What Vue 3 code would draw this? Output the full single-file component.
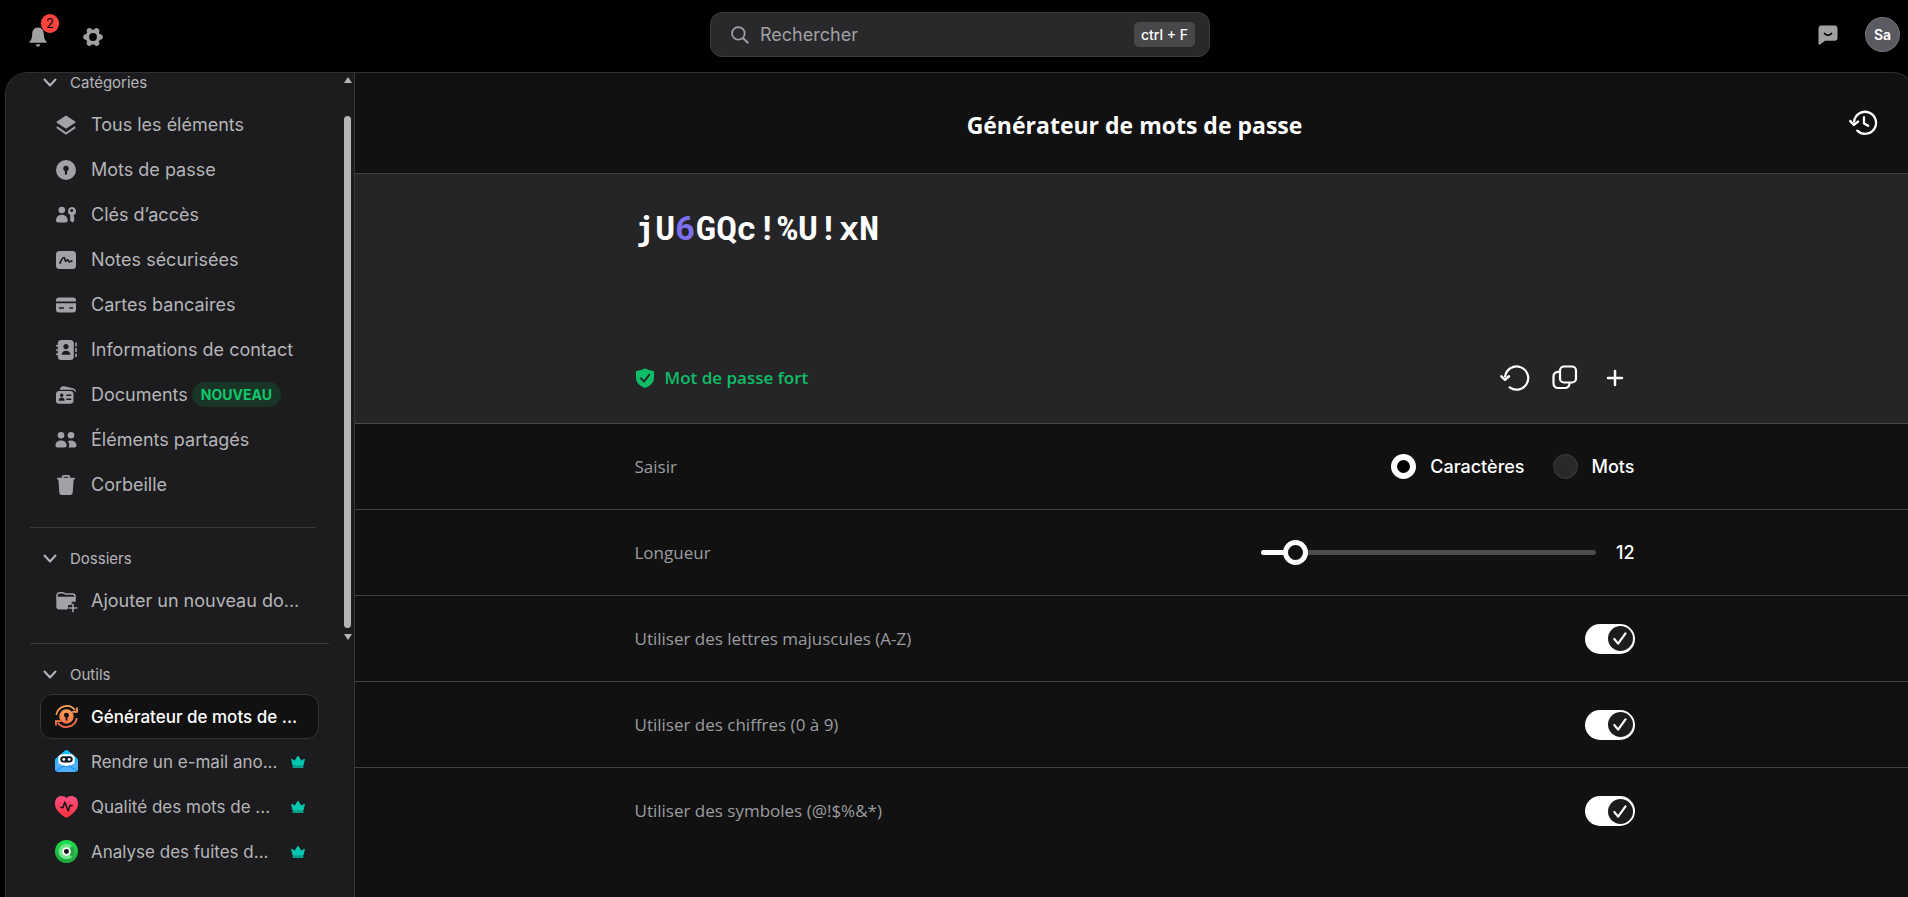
<script setup>
import { ref, h } from 'vue'

const bg = '#1c1c1e'
const glyphs = {
  chevron: '<path d="M4.500 7.500l5.500 6 5.500-6" fill="none" stroke="currentColor" stroke-width="2" stroke-linecap="round" stroke-linejoin="round"/>',
  bell: '<path d="M10 .5c-4 0-5.800 3-5.800 6.400 0 4-.9 5.800-2.600 7.500-.5.6-.2 1.300.6 1.300h15.600c.8 0 1.100-.7.6-1.300-1.700-1.700-2.600-3.500-2.600-7.500C15.800 3.500 14 .5 10 .5z"/><path d="M7.700 17.300h4.600c-.3 1.600-1.200 2.400-2.300 2.400s-2-.8-2.300-2.400z"/>',
  gear: '<circle cx="10" cy="10" r="7.400"/><path d="M2.900 10h14.200M6.400 3.800l7.200 12.400M13.600 3.800L6.400 16.200" stroke="currentColor" stroke-width="5.400" stroke-linecap="round"/><circle cx="10" cy="10" r="3.900" fill="#000"/>',
  search: '<circle cx="8.200" cy="8.200" r="7" fill="none" stroke="currentColor" stroke-width="1.900"/><path d="M13.200 13.200l6 6" stroke="currentColor" stroke-width="2.300"/>',
  chat: '<path d="M3.500.5h13A3 3 0 0 1 19.500 3.500v9.300a3 3 0 0 1-3 3H7l-5 3.800c-.8.5-1.500.2-1.500-.8V3.500a3 3 0 0 1 3-3z"/><path d="M6.500 8.500c2 2.300 5 2.300 7 0" fill="none" stroke="#000" stroke-width="1.700" stroke-linecap="round"/>',
  layers: '<path d="M10 .4l9.200 6c.5.400.5.900 0 1.300L10 13.800.8 7.700c-.5-.4-.5-.9 0-1.300z"/><path d="M.8 12.200L10 18.500l9.200-6.300" fill="none" stroke="currentColor" stroke-width="2"/>',
  keyhole: `<circle cx="10" cy="10" r="10"/><circle cx="10" cy="8.500" r="2.700" fill="${bg}"/><rect x="8.900" y="9.500" width="2.200" height="5.200" rx="1" fill="${bg}"/>`,
  passkey: `<circle cx="5.800" cy="5" r="3.300"/><path d="M0 15.600c0-3.600 2.300-5.800 5.800-5.800s5.900 2.200 5.900 5.800c0 1.300-.9 1.900-2 1.900H2c-1.200 0-2-.6-2-1.900z"/><path d="M15.700 2a4.300 4.300 0 0 1 2.200 8l-.1 1.700.9 1.200-.9 1.200.7 1.200-2 2.500-2.300-2.200V10A4.300 4.300 0 0 1 15.700 2z"/><circle cx="15.700" cy="5.600" r="1.500" fill="${bg}"/>`,
  note: `<rect y="1" width="20" height="18" rx="3.500"/><path d="M4 13c1.200-2 2.300-5.500 4-5.500 1.500 0 .4 3.700 1.800 3.700.9 0 1-1.500 2-1.300.9.200.6 2 1.600 2 .8 0 1.200-.8 2.400-.7" fill="none" stroke="${bg}" stroke-width="1.700" stroke-linecap="round"/>`,
  card: `<path d="M3 2.500h14a3 3 0 0 1 3 3v.900H0v-.9a3 3 0 0 1 3-3z"/><path d="M0 8.300h20v6.200a3 3 0 0 1-3 3H3a3 3 0 0 1-3-3z"/><path d="M3 13h5M13.500 13h3.500" stroke="${bg}" stroke-width="1.700"/>`,
  contact: `<rect x="1.800" width="16" height="20" rx="3.500"/><path d="M0 5.800h3M0 10h3M0 14.200h3" stroke="currentColor" stroke-width="1.600"/><path d="M20 2.500v4M20 8v4M20 13.500v3.500" stroke="currentColor" stroke-width="1.600"/><circle cx="10" cy="6.600" r="2.600" fill="${bg}"/><path d="M5.600 14.700c0-5.300 8.800-5.300 8.800 0z" fill="${bg}"/>`,
  documents: `<path d="M3.500 4.700C4.300 2 6 .9 8.500 1.300l8.300 1.900c2.200.5 3.300 2 3.200 4.300l-1.300-1.300c-.7-.9-1.600-1.500-3-1.500z"/><rect y="6" width="17.500" height="12.800" rx="3.300"/><circle cx="5.700" cy="10.200" r="1.700" fill="${bg}"/><path d="M2.700 15.700c0-4.200 6-4.200 6 0z" fill="${bg}"/><path d="M10.300 10.300h5M10.300 14.300h5" stroke="${bg}" stroke-width="1.600"/>`,
  people: '<circle cx="5" cy="5.200" r="3.300"/><circle cx="15" cy="5.200" r="3.300"/><path d="M-.5 15.500c0-3.200 2.300-5 5.500-5s5.600 1.800 5.600 5c0 1.300-.8 2-2 2H1.500c-1.300 0-2-.7-2-2z"/><path d="M11.700 11.200c4-1.800 8.800.3 8.800 4.300 0 1.300-.8 2-2 2h-5.900c1.100-2.200.7-4.700-.9-6.300z"/>',
  trash: '<path fill-rule="evenodd" d="M7.800 0h4.400c1.300 0 2 .8 2 2v.7h3.900c.7 0 1 .4 1 .9s-.3 1-1 1h-.5l-.9 12.900c-.1 1.500-1 2.500-2.500 2.500H5.800c-1.500 0-2.400-1-2.500-2.500L2.400 4.600h-.5c-.7 0-1-.4-1-1s.3-.9 1-.9h3.900V2c0-1.200.7-2 2-2zm-.2 2.700h4.800v-.9H7.600z"/>',
  folder: '<path d="M1 8V4.300A2.500 2.500 0 0 1 3.500 1.800h3c1.500 0 2 1.300 3.500 1.300h6.500a2.500 2.500 0 0 1 2.500 2.500V8" fill="none" stroke="currentColor" stroke-width="1.500"/><path d="M.3 8.200a2.500 2.500 0 0 1 2.500-2.500h14.400a2.500 2.500 0 0 1 2.500 2.500v2.600h-4v3.300h-3.500v3.500l-1 1H3.300a3 3 0 0 1-3-3z"/><path d="M17 12.700v8.600M12.700 17h8.600" stroke="currentColor" stroke-width="1.600"/>',
  generator: '<defs><linearGradient id="orange" x1="0" y1="0" x2="0" y2="24" gradientUnits="userSpaceOnUse"><stop stop-color="#ffaa55"/><stop offset="1" stop-color="#ff6a4d"/></linearGradient></defs><circle cx="12" cy="12" r="7.500" fill="url(#orange)"/><path d="M1.300 10.300A11 11 0 0 1 21 5.500M22.700 13.700A11 11 0 0 1 3 18.500M23 2.500v4.700h-5M1 21.500v-4.700h5" fill="none" stroke="url(#orange)" stroke-width="1.800"/><circle cx="12" cy="10.700" r="2.600" fill="#111"/><rect x="11" y="12" width="2" height="4.500" rx="1" fill="#111"/>',
  email: '<defs><linearGradient id="blue" x1="0" y1="0" x2="0" y2="24" gradientUnits="userSpaceOnUse"><stop stop-color="#0fc6ff"/><stop offset="1" stop-color="#359cff"/></linearGradient></defs><path d="M10.300.8c1-.9 2.400-.9 3.400 0L23 8.500c.6.500 1 1.300 1 2V19a4 4 0 0 1-4 4H4a4 4 0 0 1-4-4v-8.500c0-.8.400-1.500 1-2z" fill="url(#blue)"/><path d="M3.500 8.500c0-2.500 1.800-4 4-4h9c2.200 0 4 1.500 4 4v6L12 17.500l-8.500-3z" fill="#fff"/><rect x="5.500" y="6.500" width="13" height="6.500" rx="3.250" fill="#0a1420"/><circle cx="9.200" cy="9.800" r="1.500" fill="#fff"/><circle cx="14.800" cy="9.800" r="1.500" fill="#fff"/><path d="M0 12.500l9.500 4.200c1.600.8 3.400.8 5 0l9.500-4.200V19a4 4 0 0 1-4 4H4a4 4 0 0 1-4-4z" fill="#4db0ff"/><path d="M.8 21.800l8.700-5.100c1.600.8 3.400.8 5 0l8.700 5.100" fill="none" stroke="#1587e8"/>',
  health: '<defs><linearGradient id="red" x1="0" y1="0" x2="0" y2="24" gradientUnits="userSpaceOnUse"><stop stop-color="#ff5088"/><stop offset="1" stop-color="#ff303b"/></linearGradient></defs><path d="M12 3.500C15-.5 24 .2 24 9c0 6.500-5.500 10.500-10.300 14-1 .8-2.400.8-3.400 0C5.500 19.500 0 15.500 0 9 0 .2 9-.5 12 3.500z" fill="url(#red)"/><path d="M6 13h2.300l2-5.500 3.400 9 2-5.500H18" fill="none" stroke="#161618" stroke-width="1.700" stroke-linecap="round" stroke-linejoin="round"/>',
  breach: '<defs><linearGradient id="green" x1="0" y1="0" x2="0" y2="24" gradientUnits="userSpaceOnUse"><stop stop-color="#1de34c"/><stop offset="1" stop-color="#1ba23b"/></linearGradient></defs><circle cx="12" cy="12" r="12" fill="url(#green)"/><circle cx="12" cy="12" r="8.200" fill="#71e58b"/><path d="M12 12l5.800-5.800a8.200 8.200 0 0 1 0 11.600z" fill="#27a344"/><circle cx="12" cy="12" r="4.500" fill="#fff"/><circle cx="12" cy="12" r="2.600" fill="#111"/>',
  crown: '<path d="M.6 4.300l3.300 1.800L7 1.100l3.100 5 3.300-1.800-1.400 6H2z" stroke="currentColor" stroke-width="1" stroke-linejoin="round"/><path d="M1.600 12h10.800" stroke="currentColor" stroke-width="1.500"/>',
  history: '<path d="M5.100 12.700A11 11 0 1 1 8.300 21.600" fill="none" stroke="currentColor" stroke-width="2.300" stroke-linecap="round"/><path d="M1.300 12.200l3.600 3.700 4.100-3.300" fill="none" stroke="currentColor" stroke-width="2.500" stroke-linecap="round" stroke-linejoin="round"/><path d="M15 8.200v6.400l4.200 2.200" fill="none" stroke="currentColor" stroke-width="2.300" stroke-linecap="round" stroke-linejoin="round"/>',
  refresh: '<path d="M5.100 13.500A11.600 11.600 0 1 1 9.700 24.400" fill="none" stroke="currentColor" stroke-width="2.200" stroke-linecap="round"/><path d="M1.300 13.300L5 16.800l4-3.500" fill="none" stroke="currentColor" stroke-width="2.500" stroke-linecap="round" stroke-linejoin="round"/>',
  copy: '<rect x="10" y="3.500" width="16" height="16" rx="4" fill="none" stroke="currentColor" stroke-width="2.200"/><path d="M9.500 8.800H8a4.500 4.500 0 0 0-4.500 4.500V20.500A4.500 4.500 0 0 0 8 25h7a4.500 4.500 0 0 0 4.500-4.500v-.500" fill="none" stroke="currentColor" stroke-width="2.200"/>',
  plus: '<path d="M15 8v14M8 15h14" stroke="currentColor" stroke-width="2.500" stroke-linecap="round"/>',
  shield: '<path d="M10 .2c2.600 1.500 5.400 2.300 8 2.500.7.100 1 .5 1 1.200v6c0 4.800-4 8-9 10.100-5-2.100-9-5.300-9-10.100v-6c0-.7.300-1.100 1-1.200 2.600-.2 5.400-1 8-2.500z"/><path d="M6 10.300l3 3.300 5.200-6.800" fill="none" stroke="#252527" stroke-width="1.900" stroke-linecap="round"/>',
  check: '<path d="M6.300 13l3.800 4.600 7.400-10.300" fill="none" stroke="currentColor" stroke-width="2.200" stroke-linecap="round" stroke-linejoin="round"/>'
}
const Icon = ({ name, box = 20 }) =>
  h('svg', { viewBox: `0 0 ${box} ${box}`, fill: 'currentColor', 'aria-hidden': 'true', innerHTML: glyphs[name] })
Icon.props = ['name', 'box']

const categories = [
  { icon: 'layers', label: 'Tous les éléments' },
  { icon: 'keyhole', label: 'Mots de passe' },
  { icon: 'passkey', label: 'Clés d’accès' },
  { icon: 'note', label: 'Notes sécurisées' },
  { icon: 'card', label: 'Cartes bancaires' },
  { icon: 'contact', label: 'Informations de contact' },
  { icon: 'documents', label: 'Documents', badge: 'NOUVEAU' },
  { icon: 'people', label: 'Éléments partagés' },
  { icon: 'trash', label: 'Corbeille' }
]
const tools = [
  { icon: 'generator', label: 'Générateur de mots de ...', active: true },
  { icon: 'email', label: 'Rendre un e-mail ano...', premium: true },
  { icon: 'health', label: 'Qualité des mots de ...', premium: true },
  { icon: 'breach', label: 'Analyse des fuites d...', premium: true }
]
const password = 'jU6GQc!%U!xN'
const kind = ref('chars')
const length = ref(12)
const options = ref([
  { id: 'upper', label: 'Utiliser des lettres majuscules (A-Z)', on: true },
  { id: 'digits', label: 'Utiliser des chiffres (0 à 9)', on: true },
  { id: 'symbols', label: 'Utiliser des symboles (@!$%&*)', on: true }
])
</script>

<template>
  <div class="window">
    <div class="app">
      <header class="topbar">
        <div class="top-left">
          <button class="icon-btn bell" aria-label="Notifications">
            <Icon name="bell" class="i20" />
            <span class="count">2</span>
          </button>
          <button class="icon-btn" aria-label="Paramètres"><Icon name="gear" class="i20" /></button>
        </div>
        <label class="search">
          <Icon name="search" class="i18" />
          <input type="text" placeholder="Rechercher" aria-label="Rechercher" />
          <kbd>ctrl + F</kbd>
        </label>
        <div class="top-right">
          <button class="icon-btn" aria-label="Messages"><Icon name="chat" class="i20" /></button>
          <button class="avatar">Sa</button>
        </div>
      </header>

      <div class="panel">
        <aside class="sidebar">
          <div class="scroll">
            <nav class="list">
              <button class="group first"><Icon name="chevron" class="i20" />Catégories</button>
              <a v-for="c in categories" :key="c.label" href="#" class="item">
                <span class="ico"><Icon :name="c.icon" class="i20" /></span>
                <span>{{ c.label }}</span>
                <span v-if="c.badge" class="new">{{ c.badge }}</span>
              </a>
              <hr />
              <button class="group"><Icon name="chevron" class="i20" />Dossiers</button>
              <a href="#" class="item">
                <span class="ico"><Icon name="folder" class="i20" /></span>
                <span>Ajouter un nouveau do...</span>
              </a>
            </nav>
            <div class="scrollbar">
              <span class="arrow up"></span>
              <span class="thumb"></span>
              <span class="arrow down"></span>
            </div>
          </div>
          <nav class="list tools">
            <hr />
            <button class="group"><Icon name="chevron" class="i20" />Outils</button>
            <a v-for="t in tools" :key="t.label" href="#" class="item" :class="{ active: t.active }">
              <span class="ico"><Icon :name="t.icon" :box="24" class="i23" /></span>
              <span>{{ t.label }}</span>
              <Icon v-if="t.premium" name="crown" :box="14" class="crown" />
            </a>
          </nav>
        </aside>

        <main>
          <div class="title">
            <h1>Générateur de mots de passe</h1>
            <button class="icon-btn history" aria-label="Historique"><Icon name="history" :box="28" class="i28" /></button>
          </div>
          <section class="result">
            <div class="inner">
              <output class="password"><span v-for="(c, i) in password" :key="i" :class="{ digit: c >= '0' &amp;&amp; c <= '9' }">{{ c }}</span></output>
              <div class="status">
                <span class="strong"><Icon name="shield" class="i20" />Mot de passe fort</span>
                <div class="actions">
                  <button aria-label="Régénérer"><Icon name="refresh" :box="30" class="i30" /></button>
                  <button aria-label="Copier"><Icon name="copy" :box="30" class="i30" /></button>
                  <button aria-label="Ajouter"><Icon name="plus" :box="30" class="i30" /></button>
                </div>
              </div>
            </div>
          </section>
          <section class="row">
            <div class="inner line">
              <span class="name">Saisir</span>
              <div class="radios">
                <label><input v-model="kind" type="radio" name="kind" value="chars" />Caractères</label>
                <label><input v-model="kind" type="radio" name="kind" value="words" />Mots</label>
              </div>
            </div>
          </section>
          <section class="row">
            <div class="inner line">
              <label class="name" for="length">Longueur</label>
              <div class="slider">
                <input id="length" v-model="length" type="range" min="4" max="116" />
                <span>{{ length }}</span>
              </div>
            </div>
          </section>
          <section v-for="o in options" :key="o.id" class="row">
            <div class="inner line">
              <label class="name" :for="o.id">{{ o.label }}</label>
              <span class="switch">
                <input :id="o.id" v-model="o.on" type="checkbox" />
                <span class="knob"><Icon name="check" :box="25" class="i25" /></span>
              </span>
            </div>
          </section>
        </main>
      </div>
    </div>
  </div>
</template>

<style>
body { background: #000; overflow: hidden; }
</style>

<style scoped>
* { box-sizing: border-box; }
.window {
  height: 100vh;
  overflow: hidden;
  font-family: Inter, "Liberation Sans", sans-serif;
  font-size: 18px;
  color: #fff;
}
.app { width: calc(100% + 12px); height: 100%; display: flex; flex-direction: column; }
button { font: inherit; color: inherit; background: none; border: 0; padding: 0; cursor: pointer; }
svg { display: block; flex: none; overflow: visible; }
.i18 { width: 18px; height: 18px; }
.i20 { width: 20px; height: 20px; }
.i23 { width: 23px; height: 23px; }
.i25 { width: 25px; height: 25px; }
.i28 { width: 28px; height: 28px; }
.i30 { width: 30px; height: 30px; }

.topbar { height: 72px; flex: none; display: grid; grid-template-columns: 1fr 500px 1fr; align-items: start; padding: 0 20px; }
.icon-btn { color: #a1a1a1; }
.top-left { display: flex; gap: 35px; padding: 27px 0 0 8px; }
.bell { position: relative; }
.count {
  position: absolute; left: 13px; top: -13px; width: 18px; height: 19px; border-radius: 10px;
  background: #ff453f; color: #000; font-size: 13px; line-height: 18px; text-align: center;
}
.search {
  margin-top: 12px; height: 45px; border-radius: 12px; background: #29292b; border: 1px solid #3c3c3e;
  display: flex; align-items: center; padding: 0 14px 0 20px; color: #a0a0a5;
}
.search input {
  flex: 1; min-width: 0; border: 0; outline: 0; background: none; margin-left: 11px; padding: 0;
  font: inherit; color: inherit;
}
.search input::placeholder { color: #a0a0a5; opacity: 1; }
kbd { background: #48484a; color: #fff; font-family: inherit; font-weight: 500; font-size: 14px; line-height: 25px; border-radius: 5px; padding: 0 7px; }
.top-right { display: flex; justify-content: flex-end; align-items: center; gap: 27px; padding-top: 17px; }
.avatar { width: 35px; height: 35px; border-radius: 50%; background: #5a5a60; border: 1px solid #77777b; font-size: 14px; font-weight: 600; }

.panel {
  flex: 1; min-height: 0; margin: 0 5px; display: flex; overflow: hidden;
  border: 1px solid #303032; border-bottom: 0; border-radius: 22px 22px 0 0; background: #111;
}
.sidebar { width: 349px; flex: none; background: #1c1c1e; border-right: 1px solid #353537; color: #b5b5b9; }
.scroll { display: flex; height: 569px; overflow: hidden; }
.list { flex: 1; min-width: 0; padding: 0 0 0 34px; }
.group { display: flex; align-items: center; gap: 10px; height: 40px; width: 100%; font-size: 15px; }
.group.first { margin-top: -11px; }
.item {
  display: flex; align-items: center; height: 45px; width: 279px; padding-left: 15px;
  border: 1px solid transparent; border-radius: 12px; color: inherit; text-decoration: none; white-space: nowrap;
}
.tools .item { font-size: 17px; }
.item.active { background: #111; border-color: #353537; color: #fff; font-weight: 500; }
.ico { width: 20px; margin-right: 15px; display: flex; justify-content: center; color: #a1a1a6; flex: none; }
.new { margin-left: 4px; background: #183528; color: #12c76b; font-size: 14px; font-weight: 700; line-height: 25px; padding: 0 9px; border-radius: 13px; }
.crown { width: 14px; height: 14px; color: #00c7ae; margin: 0 13px 0 auto; }
hr { border: 0; height: 1px; background: #39393b; margin: 20px 25px 10px -10px; }
.tools hr { margin-top: 1px; }
.scrollbar { flex: none; width: 13px; display: flex; flex-direction: column; align-items: flex-start; padding: 4px 0 2px 2px; }
.thumb { width: 7px; flex: 1; margin: 33px 0 6px 1px; border-radius: 4px; background: #b5b5b8; }
.arrow { border: 0 solid transparent; border-width: 0 4px; margin-left: 1px; }
.arrow.up { border-bottom: 6px solid #b5b5b8; }
.arrow.down { border-top: 6px solid #b5b5b8; }

main { flex: 1; min-width: 0; font-weight: 500; }
.title { height: 101px; display: grid; grid-template-columns: 1fr auto 1fr; align-items: center; padding-right: 37px; border-bottom: 1px solid #404043; }
h1 { grid-column: 2; margin: 4px -37px 0 0; font: 700 23px/32px "Open Sans", "Noto Sans", sans-serif; }
.history { grid-column: 3; justify-self: end; color: #fff; }
.inner { width: 1000px; max-width: 100%; margin: 0 auto; }
.result { background: #252527; height: 250px; border-bottom: 1px solid #49494b; }
.result .inner { height: 100%; display: flex; flex-direction: column; justify-content: space-between; padding: 33px 0 25px; }
.password { display: block; font: 700 34px/40px "Roboto Mono", "DejaVu Sans Mono", monospace; }
.digit { color: #7d6ff0; }
.status { display: flex; justify-content: space-between; align-items: center; }
.strong { display: flex; align-items: center; gap: 10px; color: #0dbd68; font: 600 17px/24px "Open Sans", "Noto Sans", sans-serif; }
.actions { display: flex; gap: 10px; }
.actions button { width: 40px; height: 40px; display: grid; place-items: center; }
.row { height: 86px; border-bottom: 1px solid #414144; }
.row:last-child { border-bottom: 0; }
.line { height: 100%; display: flex; align-items: center; justify-content: space-between; }
.name { color: #9c9ca0; font: 500 17px/24px "Open Sans", "Noto Sans", sans-serif; }
.radios { display: flex; gap: 28px; }
.radios label { display: flex; align-items: center; gap: 14px; }
.radios input { appearance: none; margin: 0; width: 25px; height: 25px; border-radius: 50%; background: #29292b; border: 1px solid #3c3c3e; }
.radios input:checked { background: #000; border: 6px solid #fff; }
.slider { display: flex; align-items: center; gap: 20px; }
.slider input {
  appearance: none; width: 335px; height: 25px; margin: 0; background: none;
}
.slider input::-webkit-slider-runnable-track { height: 5px; border-radius: 3px; background: linear-gradient(90deg, #fff 30px, #4b4b50 30px); }
.slider input::-webkit-slider-thumb { appearance: none; width: 25px; height: 25px; margin-top: -10px; border-radius: 50%; border: 5px solid #fff; background: #111; }
.switch { display: grid; width: 50px; height: 30px; align-items: center; }
.switch > * { grid-area: 1 / 1; }
.switch input { appearance: none; margin: 0; width: 50px; height: 30px; border-radius: 15px; background: #48484a; }
.switch input:checked { background: #fff; }
.knob { width: 25px; height: 25px; margin-left: 2px; border-radius: 50%; background: #1c1c1e; pointer-events: none; z-index: 1; }
.switch input:checked + .knob { margin-left: 23px; }
</style>
